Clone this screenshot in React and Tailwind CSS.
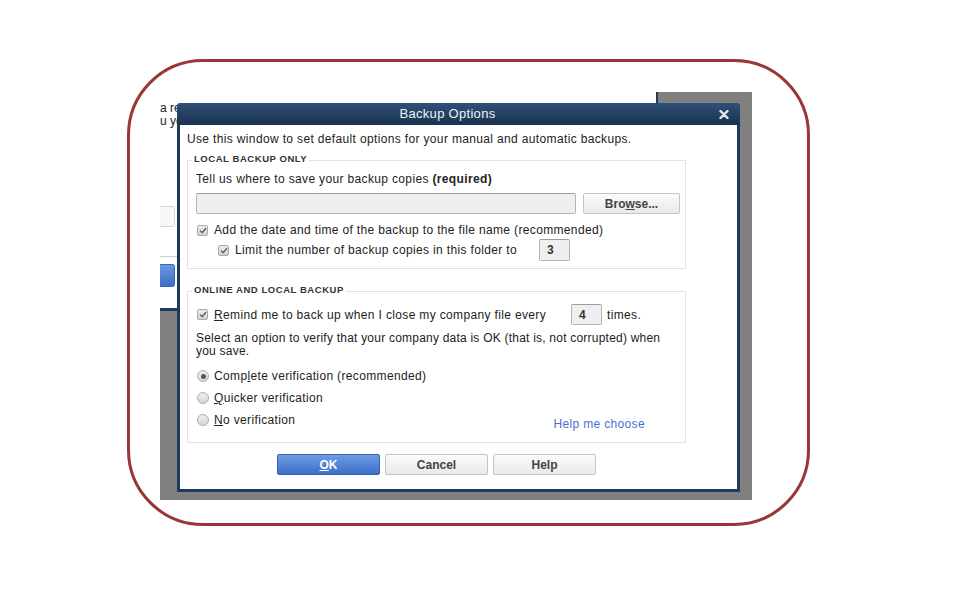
import React from 'react';

const Check = ({ className = '' }) => (
    <span className={`flex h-[11px] w-[11px] shrink-0 items-center justify-center rounded-[2px] border border-[#a9a9a9] bg-linear-to-b from-[#ececec] to-[#d2d2d2] ${className}`}>
        <svg width="8" height="7" viewBox="0 0 8 7">
            <path d="M1 3.6 L3.1 5.6 L7 1.2" fill="none" stroke="#555" strokeWidth="1.3" />
        </svg>
    </span>
);

const Radio = ({ checked }) => (
    <span className="flex h-[12px] w-[12px] shrink-0 items-center justify-center rounded-full border border-[#adadad] bg-linear-to-b from-[#efefef] to-[#d6d6d6]">
        {checked && <span className="h-[5px] w-[5px] rounded-full bg-[#555]" />}
    </span>
);

const Field = ({ value, className = '' }) => (
    <span className={`flex items-center rounded-[2px] border border-[#b4b4b4] border-t-[#9c9c9c] bg-[#efefef] pl-[7px] text-[12px] font-bold text-[#333] ${className}`}>
        {value}
    </span>
);

const GrayButton = ({ children, className = '' }) => (
    <button className={`flex items-center justify-center rounded-[2px] border border-[#c4c4c4] bg-linear-to-b from-[#fbfbfb] to-[#e9e9e9] text-[12px] font-bold tracking-normal text-[#444] ${className}`}>
        {children}
    </button>
);

const Legend = ({ children }) => (
    <span className="-mt-[8px] -ml-[4px] block w-fit bg-white px-[2px] text-[9.5px] font-bold leading-[11px] tracking-[0.55px] text-[#333]">
        {children}
    </span>
);

const ParentWindow = () => (
    <div className="absolute left-0 top-0 flex h-[219px] w-[498px] flex-col border-b-[3px] border-r-[2px] border-[#1e3a5c] bg-white text-[12px] leading-[13px] text-[#222]">
        <span className="mt-[10px] whitespace-nowrap">a recent</span>
        <span className="whitespace-nowrap">u you</span>
        <span className="mt-[78px] h-[21px] w-[15px] rounded-r-[2px] border border-l-0 border-[#d6d6d6] bg-[#f7f7f7]" />
        <span className="mt-[29px] h-px w-[17px] bg-[#cfcfcf]" />
        <span className="mt-[7px] h-[23px] w-[15px] rounded-r-[3px] border border-l-0 border-[#3a66b8] bg-linear-to-b from-[#6b98e2] to-[#3c6ec8]" />
    </div>
);

const Dialog = () => (
    <div className="absolute left-[17px] top-[11px] flex h-[389px] w-[563px] flex-col">
        <div className="relative flex h-[22px] shrink-0 items-center justify-center rounded-t-[3px] bg-linear-to-b from-[#2f5077] to-[#1a3251] pr-[22px] text-[13px] tracking-[0.3px] text-[#eef2f6]">
            Backup Options
            <svg className="absolute right-[11px] top-[7px]" width="10" height="9" viewBox="0 0 10 9">
                <path d="M1.5 1 L8.5 8 M8.5 1 L1.5 8" stroke="#e4e8ee" strokeWidth="2.4" strokeLinecap="round" />
            </svg>
        </div>
        <div className="flex flex-1 flex-col border-x-[3px] border-b-[3px] border-[#1d3a5e] bg-white px-[7px] text-[12px] leading-[14px] tracking-[0.35px] text-[#222]">
            <p className="mt-[7px]">Use this window to set default options for your manual and automatic backups.</p>

            <div className="mt-[14px] flex w-[499px] flex-col border border-[#e2e2e2] pb-[7px] pl-[8px] pr-[5px]">
                <Legend>LOCAL BACKUP ONLY</Legend>
                <p className="mt-[8px]">
                    Tell us where to save your backup copies <b>(required)</b>
                </p>
                <div className="mt-[7px] flex h-[21px] gap-[7px]">
                    <span className="w-[380px] rounded-[2px] border border-[#b6b6b6] border-t-[#9d9d9d] bg-[#efefef]" />
                    <GrayButton className="w-[97px]">
                        <span>Bro<u>w</u>se...</span>
                    </GrayButton>
                </div>
                <label className="mt-[9px] flex items-center gap-[6px] pl-[1px]">
                    <Check />
                    <span>Add the date and time of the backup to the file name (recommended)</span>
                </label>
                <label className="mt-[2px] flex h-[22px] items-center pl-[22px]">
                    <Check />
                    <span className="ml-[6px] w-[304px]">Limit the number of backup copies in this folder to</span>
                    <Field value="3" className="h-[22px] w-[31px]" />
                </label>
            </div>

            <div className="mt-[22px] flex w-[499px] flex-col border border-[#e2e2e2] pb-[14px] pl-[8px] pr-[5px]">
                <Legend>ONLINE AND LOCAL BACKUP</Legend>
                <label className="mt-[9px] flex h-[21px] items-center pl-[1px]">
                    <Check />
                    <span className="ml-[6px] w-[357px]">
                        <u>R</u>emind me to back up when I close my company file every
                    </span>
                    <Field value="4" className="h-[21px] w-[31px]" />
                    <span className="ml-[5px]">times.</span>
                </label>
                <p className="mt-[7px] w-[470px] leading-[13px] tracking-[0.22px]">
                    Select an option to verify that your company data is OK (that is, not corrupted) when you save.
                </p>
                <div className="mt-[10px] flex flex-col gap-[6px] pl-[1px]">
                    <label className="flex h-[16px] items-center gap-[5px]">
                        <Radio checked />
                        <span>Comp<u>l</u>ete verification (recommended)</span>
                    </label>
                    <label className="flex h-[16px] items-center gap-[5px]">
                        <Radio />
                        <span><u>Q</u>uicker verification</span>
                    </label>
                    <div className="flex h-[16px] items-start justify-between pr-[35px]">
                        <label className="flex h-[16px] items-center gap-[5px]">
                            <Radio />
                            <span><u>N</u>o verification</span>
                        </label>
                        <a className="mt-[5px] text-[#4a70d6]">Help me choose</a>
                    </div>
                </div>
            </div>

            <div className="mt-[11px] flex h-[21px] gap-[5px] pl-[90px]">
                <button className="flex w-[103px] items-center justify-center rounded-[2px] border border-[#3563b4] bg-linear-to-b from-[#6e9be3] to-[#3e6fc8] text-[12px] font-bold tracking-normal text-white">
                    <span><u>O</u>K</span>
                </button>
                <GrayButton className="w-[103px]">Cancel</GrayButton>
                <GrayButton className="w-[103px]">Help</GrayButton>
            </div>
        </div>
    </div>
);

export default function App() {
    return (
        <div className="h-[600px] w-[960px] bg-white pl-[127px] pt-[59px] font-['Liberation_Sans',Arial,sans-serif]">
            <div className="h-[467px] w-[683px] rounded-[76px] border-[3px] border-[#9b3636] pl-[30px] pt-[30px]">
                <div className="relative h-[408px] w-[592px] overflow-hidden bg-[#808080]">
                    <ParentWindow />
                    <Dialog />
                </div>
            </div>
        </div>
    );
}
